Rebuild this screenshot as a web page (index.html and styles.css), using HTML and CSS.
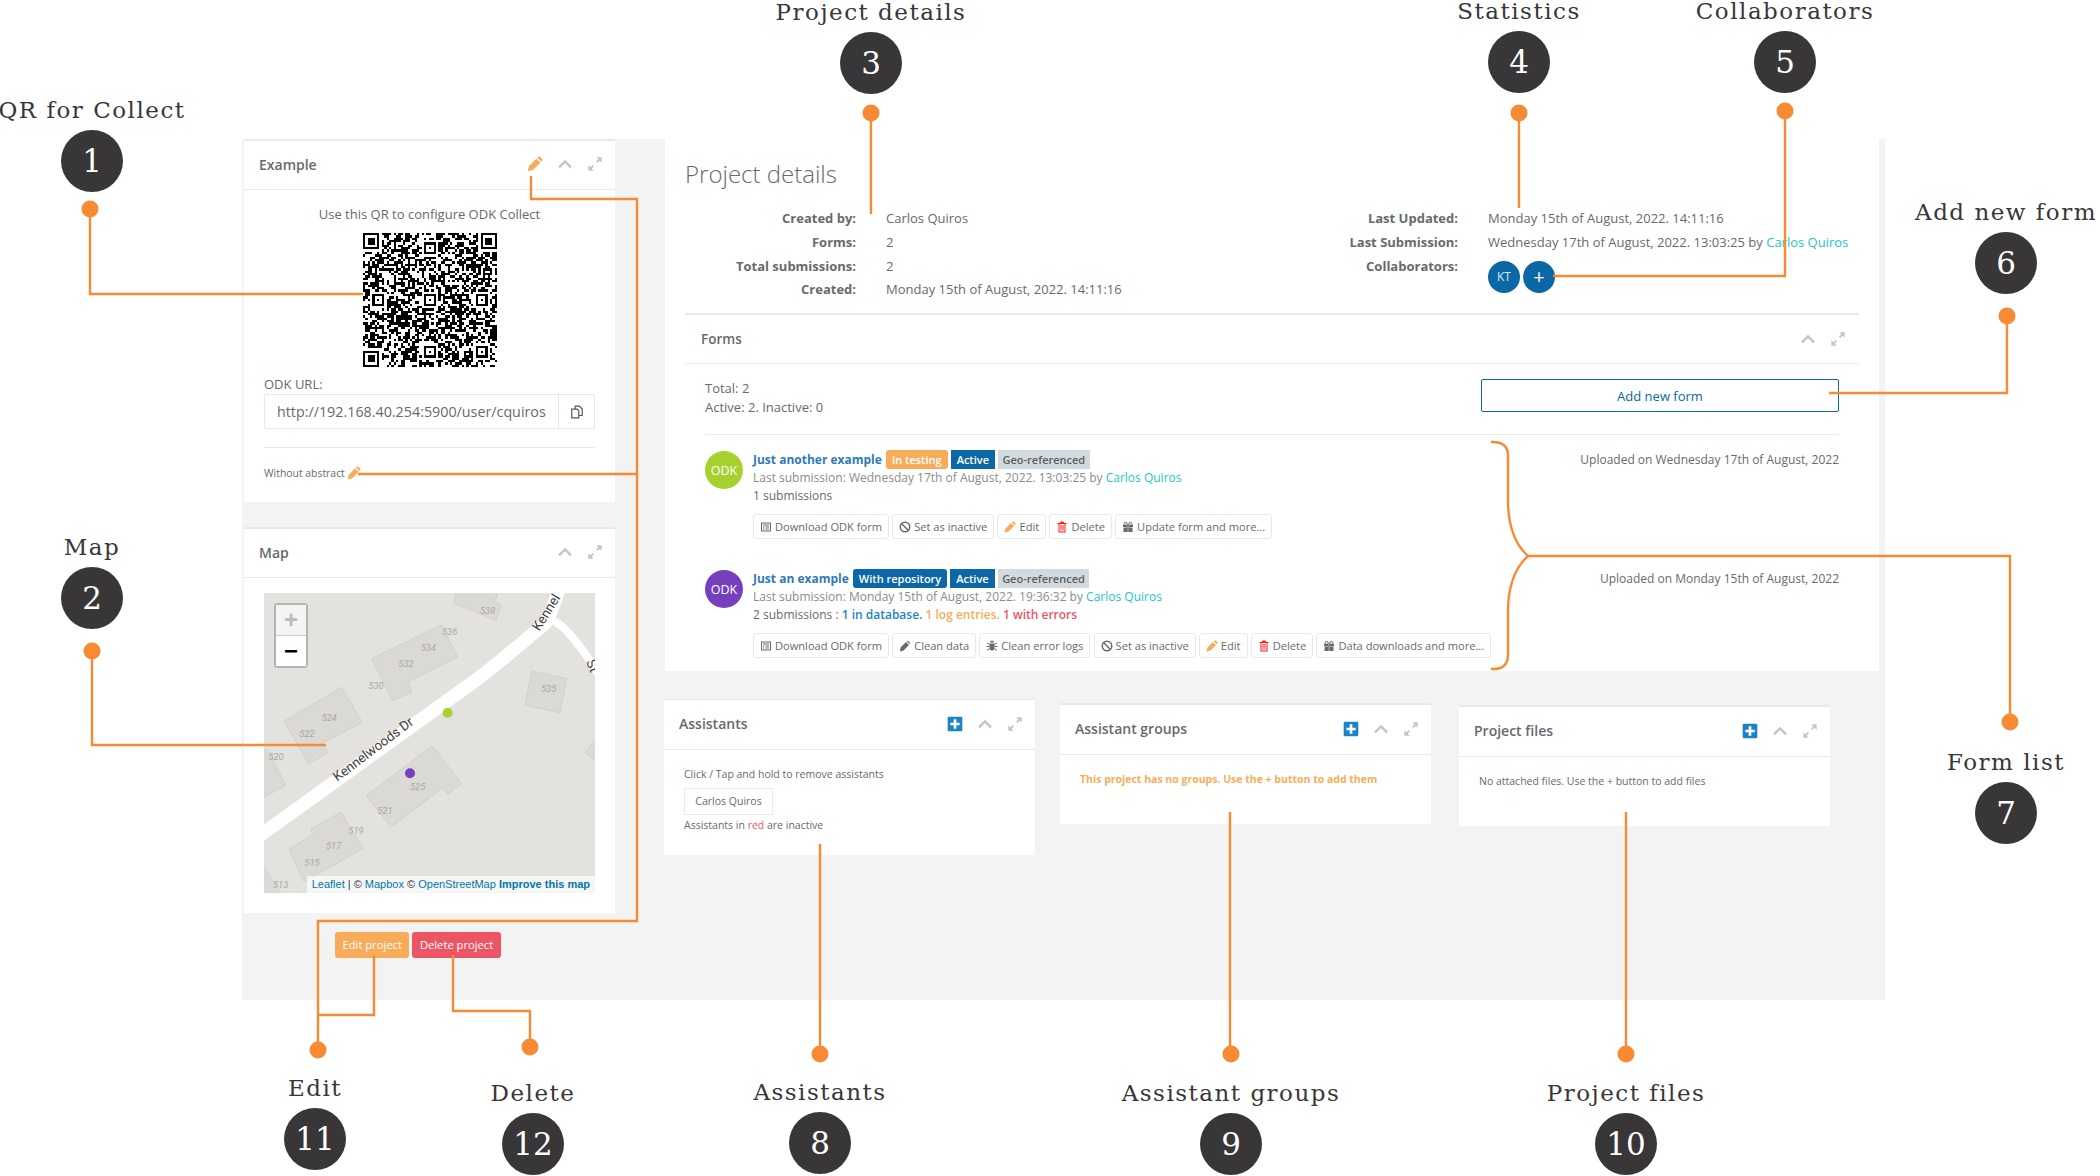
FILE: index.html
```html
<!DOCTYPE html>
<html lang="en">
<head>
<meta charset="UTF-8">
<meta name="viewport" content="width=device-width, initial-scale=1.0">
<title>Project details</title>
<link rel="stylesheet" href="styles.css">
</head>
<body>
<svg class="icon-defs" width="0" height="0">
  <symbol id="i-pencil" viewBox="0 0 24 24"><path d="M1 23l2-8L14 4l6 6L9 21zM15.500 2.500l1.800-1.500q1-.7 2 0l3.700 3.700q.7 1 0 2L21.500 8.500z"/></symbol>
  <symbol id="i-chevron" viewBox="0 0 24 24"><path d="M3 17L12 8l9 9" fill="none" stroke="currentColor" stroke-width="3.600"/></symbol>
  <symbol id="i-expand" viewBox="0 0 24 24"><path d="M14 2h8v8l-3-3-3.500 3.500-2-2L17 5zM10 22H2v-8l3 3 3.500-3.500 2 2L7 19z"/></symbol>
  <symbol id="i-plus-square" viewBox="0 0 24 24"><path fill-rule="evenodd" d="M3 1h18q2 0 2 2v18q0 2-2 2H3q-2 0-2-2V3q0-2 2-2zM10 5v5H5v4h5v5h4v-5h5v-4h-5V5z"/></symbol>
  <symbol id="i-form" viewBox="0 0 24 24"><path fill-rule="evenodd" d="M2 3h20v18H2zM4 5v14h16V5zM6 7h12v2H6zM6 11h3v2H6zM11 11h7v2h-7zM6 15h3v2H6zM11 15h7v2h-7z"/></symbol>
  <symbol id="i-ban" viewBox="0 0 24 24"><circle cx="12" cy="12" r="9.500" fill="none" stroke="currentColor" stroke-width="3"/><path d="M5.500 5.500l13 13" stroke="currentColor" stroke-width="3"/></symbol>
  <symbol id="i-trash" viewBox="0 0 24 24"><path fill-rule="evenodd" d="M9 1h6l1 3h5v2h-2v17H5V6H3V4h5zM7 6v15h10V6zM9 8h2v11H9zM13 8h2v11h-2z"/></symbol>
  <symbol id="i-gift" viewBox="0 0 24 24"><path d="M2 7h8v5H2zM14 7h8v5h-8zM10.500 7h3v15h-3zM3 13h7v9H3zM14 13h7v9h-7z"/><path d="M12 7C9 1 3 2 5 6M12 7c3-6 9-5 7-1" fill="none" stroke="currentColor" stroke-width="2"/></symbol>
  <symbol id="i-bug" viewBox="0 0 24 24"><path d="M8 5a4 4 0 0 1 8 0zM7 7h10v9a5 5 0 0 1-10 0z"/><path d="M7 9L2 6M17 9l5-3M7 13H1M17 13h6M7 17l-5 4M17 17l5 4" stroke="currentColor" stroke-width="2"/></symbol>
  <symbol id="i-copy" viewBox="0 0 24 24"><path d="M9 7V2h7l5 5v11h-6M3 7h9l3 3v12H3z" fill="none" stroke="currentColor" stroke-width="2"/></symbol>
  <symbol id="i-brush" viewBox="0 0 24 24"><path d="M2 23l1-8L14 4l6 6L9 21zM15.500 2.500l2-1.500 5 5-1.500 2z"/></symbol>
</svg>

<div class="app">
  <div class="side">
    <section class="panel panel-example">
      <header class="panel-head">
        <h5>Example</h5>
        <div class="tools">
          <svg class="ico ico-orange"><use href="#i-pencil"/></svg>
          <svg class="ico ico-muted"><use href="#i-chevron"/></svg>
          <svg class="ico ico-muted"><use href="#i-expand"/></svg>
        </div>
      </header>
      <div class="panel-body example-body">
        <p class="qr-title">Use this QR to configure ODK Collect</p>
        <svg class="qr" id="qr" viewBox="0 0 57 57" shape-rendering="crispEdges"><path id="qrPath"/></svg>
        <label class="url-label">ODK URL:</label>
        <div class="url-group">
          <input class="url-input" type="text" value="http://192.168.40.254:5900/user/cquiros">
          <span class="url-copy"><svg class="ico-copy"><use href="#i-copy"/></svg></span>
        </div>
        <hr class="thin">
        <p class="abstract">Without abstract <svg class="ico-small ico-orange"><use href="#i-pencil"/></svg></p>
      </div>
    </section>

    <section class="panel panel-map">
      <header class="panel-head">
        <h5>Map</h5>
        <div class="tools">
          <svg class="ico ico-muted"><use href="#i-chevron"/></svg>
          <svg class="ico ico-muted"><use href="#i-expand"/></svg>
        </div>
      </header>
      <div class="panel-body map-body">
        <div class="map">
          <svg class="map-svg" viewBox="102 219 993 899">
            <g class="houses">
              <polygon points="680,210 673,250 798,300 815,255 795,245 807,210"/>
              <polygon points="426,415 634,314 683,410 533,485 547,515 488,542"/>
              <polygon points="162,603 335,501 397,606 275,670 295,697 236,730"/>
              <polygon points="95,688 112,688 167,795 95,835"/>
              <polygon points="905,453 1010,475 990,578 885,555"/>
              <polygon points="1100,652 1065,697 1100,724"/>
              <polygon points="409,827 606,677 694,790 654,822 638,803 483,921"/>
              <polygon points="177,988 248,943 242,927 333,876 399,985 222,1085"/>
              <polygon points="95,1040 108,1048 155,1125 95,1125"/>
            </g>
            <g class="roads">
              <path class="road" d="M90 946L740 478Q780 450 945 310Q965 280 985 210"/>
              <path class="road road-small" d="M960 298Q1010 310 1105 460"/>
            </g>
            <g class="house-nums">
              <text x="750" y="282">538</text><text x="636" y="346">536</text><text x="572" y="392">534</text>
              <text x="505" y="441">532</text><text x="415" y="507">530</text><text x="933" y="515">535</text>
              <text x="275" y="604">524</text><text x="208" y="650">522</text><text x="115" y="719">520</text>
              <text x="540" y="809">525</text><text x="442" y="881">521</text><text x="355" y="943">519</text>
              <text x="288" y="988">517</text><text x="223" y="1037">515</text><text x="129" y="1103">513</text>
            </g>
            <g class="street-names">
              <text transform="translate(322 785) rotate(-37)">Kennelwoods Dr</text>
              <text transform="translate(928 335) rotate(-58)">Kennel</text>
              <text transform="translate(1068 425) rotate(68)">St</text>
            </g>
            <circle class="pin-green" cx="653" cy="578" r="15"/>
            <circle class="pin-purple" cx="540" cy="759" r="15"/>
          </svg>
          <div class="zoom-ctl">
            <span class="zoom-btn zoom-off">+</span>
            <span class="zoom-btn">&minus;</span>
          </div>
          <div class="attrib"><a>Leaflet</a> | &copy; <a>Mapbox</a> &copy; <a>OpenStreetMap</a> <a class="attrib-strong">Improve this map</a></div>
        </div>
      </div>
    </section>

    <div class="project-actions">
      <button class="btn btn-warning">Edit project</button>
      <button class="btn btn-danger">Delete project</button>
    </div>
  </div>

  <div class="content">
    <section class="main-panel">
      <h2 class="page-title">Project details</h2>
      <div class="details">
        <dl class="facts facts-left">
          <dt>Created by:</dt><dd>Carlos Quiros</dd>
          <dt>Forms:</dt><dd>2</dd>
          <dt>Total submissions:</dt><dd>2</dd>
          <dt>Created:</dt><dd>Monday 15th of August, 2022. 14:11:16</dd>
        </dl>
        <dl class="facts facts-right">
          <dt>Last Updated:</dt><dd>Monday 15th of August, 2022. 14:11:16</dd>
          <dt>Last Submission:</dt><dd>Wednesday 17th of August, 2022. 13:03:25 by <a class="teal">Carlos Quiros</a></dd>
          <dt>Collaborators:</dt>
          <dd class="collabs"><span class="collab">KT</span><span class="collab collab-add">+</span></dd>
        </dl>
      </div>

      <div class="forms">
        <header class="forms-head">
          <h5>Forms</h5>
          <div class="tools">
            <svg class="ico ico-muted"><use href="#i-chevron"/></svg>
            <svg class="ico ico-muted"><use href="#i-expand"/></svg>
          </div>
        </header>
        <div class="forms-body">
          <div class="forms-summary">
            <div class="counts">Total: 2<br>Active: 2. Inactive: 0</div>
            <button class="btn-add">Add new form</button>
          </div>
          <hr class="thin">

          <article class="form-row">
            <span class="avatar avatar-green">ODK</span>
            <div class="form-info">
              <div class="form-title"><a>Just another example</a><span class="tag tag-orange">In testing</span><span class="tag tag-blue">Active</span><span class="tag tag-grey">Geo-referenced</span></div>
              <div class="form-line form-last">Last submission: Wednesday 17th of August, 2022. 13:03:25 by <a class="teal">Carlos Quiros</a></div>
              <div class="form-line">1 submissions</div>
              <div class="form-btns">
                <button class="btn-sm"><svg class="b-ico"><use href="#i-form"/></svg>Download ODK form</button>
                <button class="btn-sm"><svg class="b-ico"><use href="#i-ban"/></svg>Set as inactive</button>
                <button class="btn-sm"><svg class="b-ico ico-orange"><use href="#i-pencil"/></svg>Edit</button>
                <button class="btn-sm"><svg class="b-ico ico-red"><use href="#i-trash"/></svg>Delete</button>
                <button class="btn-sm"><svg class="b-ico"><use href="#i-gift"/></svg>Update form and more...</button>
              </div>
            </div>
            <div class="uploaded">Uploaded on Wednesday 17th of August, 2022</div>
          </article>

          <article class="form-row">
            <span class="avatar avatar-purple">ODK</span>
            <div class="form-info">
              <div class="form-title"><a>Just an example</a><span class="tag tag-blue tag-round">With repository</span><span class="tag tag-blue">Active</span><span class="tag tag-grey">Geo-referenced</span></div>
              <div class="form-line form-last">Last submission: Monday 15th of August, 2022. 19:36:32 by <a class="teal">Carlos Quiros</a></div>
              <div class="form-line">2 submissions : <b class="c-blue">1 in database.</b> <b class="c-orange">1 log entries.</b> <b class="c-red">1 with errors</b></div>
              <div class="form-btns">
                <button class="btn-sm"><svg class="b-ico"><use href="#i-form"/></svg>Download ODK form</button>
                <button class="btn-sm"><svg class="b-ico"><use href="#i-brush"/></svg>Clean data</button>
                <button class="btn-sm"><svg class="b-ico"><use href="#i-bug"/></svg>Clean error logs</button>
                <button class="btn-sm"><svg class="b-ico"><use href="#i-ban"/></svg>Set as inactive</button>
                <button class="btn-sm"><svg class="b-ico ico-orange"><use href="#i-pencil"/></svg>Edit</button>
                <button class="btn-sm"><svg class="b-ico ico-red"><use href="#i-trash"/></svg>Delete</button>
                <button class="btn-sm"><svg class="b-ico"><use href="#i-gift"/></svg>Data downloads and more...</button>
              </div>
            </div>
            <div class="uploaded">Uploaded on Monday 15th of August, 2022</div>
          </article>
        </div>
      </div>
    </section>

    <div class="lower">
      <section class="panel panel-assist">
        <header class="panel-head panel-head-low">
          <h5>Assistants</h5>
          <div class="tools">
            <svg class="ico ico-blue"><use href="#i-plus-square"/></svg>
            <svg class="ico ico-muted"><use href="#i-chevron"/></svg>
            <svg class="ico ico-muted"><use href="#i-expand"/></svg>
          </div>
        </header>
        <div class="panel-body assist-body">
          <p>Click / Tap and hold to remove assistants</p>
          <span class="chip">Carlos Quiros</span>
          <p>Assistants in <span class="c-red">red</span> are inactive</p>
        </div>
      </section>

      <section class="panel panel-groups">
        <header class="panel-head panel-head-low">
          <h5>Assistant groups</h5>
          <div class="tools">
            <svg class="ico ico-blue"><use href="#i-plus-square"/></svg>
            <svg class="ico ico-muted"><use href="#i-chevron"/></svg>
            <svg class="ico ico-muted"><use href="#i-expand"/></svg>
          </div>
        </header>
        <div class="panel-body note-body"><p class="note-warn">This project has no groups. Use the + button to add them</p></div>
      </section>

      <section class="panel panel-files">
        <header class="panel-head panel-head-low">
          <h5>Project files</h5>
          <div class="tools">
            <svg class="ico ico-blue"><use href="#i-plus-square"/></svg>
            <svg class="ico ico-muted"><use href="#i-chevron"/></svg>
            <svg class="ico ico-muted"><use href="#i-expand"/></svg>
          </div>
        </header>
        <div class="panel-body note-body"><p class="note-plain">No attached files. Use the + button to add files</p></div>
      </section>
    </div>
  </div>
</div>

<!-- annotation layer: leader lines, dots and numbered callouts -->
<svg class="leaders" viewBox="0 0 2100 1176">
  <g class="lines">
    <path d="M90 209V294H363"/>
    <path d="M92 651V745H326"/>
    <path d="M871 113V214"/>
    <path d="M1519 113V208"/>
    <path d="M1785 111V276H1553"/>
    <path d="M2007 316V393H1829"/>
    <path d="M2010 722V556H1528"/>
    <path d="M1491 442Q1508 441 1508 456V500Q1508 538 1528 556Q1508 574 1508 612V655Q1508 670 1491 669"/>
    <path d="M820 1054V844"/>
    <path d="M1230 1054V812"/>
    <path d="M1626 1054V812"/>
    <path d="M531 176V199H637V921H318V1050"/>
    <path d="M358 474H637"/>
    <path d="M374 955V1015H318"/>
    <path d="M530 1047V1011H453V955"/>
  </g>
  <g class="dots">
    <circle cx="90" cy="209" r="8.500"/><circle cx="92" cy="651" r="8.500"/>
    <circle cx="871" cy="113" r="8.500"/><circle cx="1519" cy="113" r="8.500"/>
    <circle cx="1785" cy="111" r="8.500"/><circle cx="2007" cy="316" r="8.500"/>
    <circle cx="2010" cy="722" r="8.500"/><circle cx="820" cy="1054" r="8.500"/>
    <circle cx="1231" cy="1054" r="8.500"/><circle cx="1626" cy="1054" r="8.500"/>
    <circle cx="318" cy="1050" r="8.500"/><circle cx="530" cy="1047" r="8.500"/>
  </g>
</svg>
<div class="callout c1"><span class="callout-label">QR for Collect</span><span class="badge">1</span></div>
<div class="callout c2"><span class="callout-label">Map</span><span class="badge">2</span></div>
<div class="callout c3"><span class="callout-label">Project details</span><span class="badge">3</span></div>
<div class="callout c4"><span class="callout-label">Statistics</span><span class="badge">4</span></div>
<div class="callout c5"><span class="callout-label">Collaborators</span><span class="badge">5</span></div>
<div class="callout c6"><span class="callout-label">Add new form</span><span class="badge">6</span></div>
<div class="callout c7"><span class="callout-label">Form list</span><span class="badge">7</span></div>
<div class="callout c8"><span class="callout-label">Assistants</span><span class="badge">8</span></div>
<div class="callout c9"><span class="callout-label">Assistant groups</span><span class="badge">9</span></div>
<div class="callout c10"><span class="callout-label">Project files</span><span class="badge">10</span></div>
<div class="callout c11"><span class="callout-label">Edit</span><span class="badge">11</span></div>
<div class="callout c12"><span class="callout-label">Delete</span><span class="badge">12</span></div>

<script>
// draws a QR-looking block: finder and alignment squares plus noise
document.addEventListener("DOMContentLoaded", function() {
  const size = 57;
  const grid = [];
  let seed = 20220815;

  function rand() {
    seed = (seed * 1103515245 + 12345) % 2147483648;
    return (seed >> 8) % 100;
  }

  for (let y = 0; y < size; y++) {
    grid[y] = [];
    for (let x = 0; x < size; x++) {
      grid[y][x] = rand() < 55;
    }
  }

  function square(cx, cy, outer) {
    for (let y = -outer - 1; y <= outer + 1; y++) {
      for (let x = -outer - 1; x <= outer + 1; x++) {
        const row = grid[cy + y];
        if (!row || row[cx + x] === undefined) continue;
        const d = Math.max(Math.abs(x), Math.abs(y));
        row[cx + x] = d === outer || d < outer - 1;
      }
    }
  }

  square(3, 3, 3);
  square(size - 4, 3, 3);
  square(3, size - 4, 3);
  [[28, 6], [6, 28], [28, 28], [50, 28], [28, 50], [50, 50]].forEach(function(p) {
    square(p[0], p[1], 2);
  });

  let d = '';
  for (let y = 0; y < size; y++) {
    for (let x = 0; x < size; x++) {
      if (grid[y][x]) d += 'M' + x + ' ' + y + 'h1v1h-1z';
    }
  }
  document.getElementById('qrPath').setAttribute('d', d);
});
</script>
</body>
</html>
```

FILE: styles.css
```css
html, body {
  margin: 0;
  padding: 0;
  background-color: white;
}

body {
  position: relative;
  width: 2100px;
  height: 1176px;
  overflow: hidden;
  font-family: 'Open Sans', sans-serif;
  font-size: 13px;
  color: #676a6c;
}

h2, h5, p, dl, dd {
  margin: 0;
}

a {
  color: inherit;
}

button {
  font-family: inherit;
  cursor: pointer;
}

.icon-defs {
  position: absolute;
}

.app {
  display: flex;
  gap: 49px;
  box-sizing: border-box;
  width: 1643px;
  height: 861px;
  margin: 139px 0 0 242px;
  background-color: #f3f3f3;
}

.side {
  flex: 0 0 371px;
  margin-left: 2px;
}

.content {
  flex: 1;
}

/* Panels */
.panel {
  box-sizing: border-box;
  width: 371px;
  background-color: white;
  border-top: 2px solid #e7eaec;
}

.panel-head {
  display: flex;
  align-items: center;
  justify-content: space-between;
  box-sizing: border-box;
  height: 49px;
  padding: 0 12px 2px 15px;
  border-bottom: 1px solid #e7eaec;
}

.panel-head h5, .forms-head h5 {
  font-size: 14px;
  font-weight: 600;
}

.panel-head-low {
  height: 50px;
}

.tools {
  display: flex;
  gap: 14px;
  align-items: center;
}

.ico {
  width: 16px;
  height: 16px;
  fill: currentColor;
}

.ico-muted {
  color: #c4c4c4;
}

.ico-orange {
  color: #f8ac59;
  fill: #f8ac59;
}

.ico-blue {
  color: #1c84c6;
}

.ico-red {
  color: #ff1a1a;
  fill: #ff1a1a;
}

.panel-example {
  height: 363px;
}

.example-body {
  padding: 14px 20px 0;
}

.qr-title {
  line-height: 20px;
  text-align: center;
}

.qr {
  display: block;
  width: 134px;
  height: 134px;
  margin: 9px auto 7px;
}

.url-label {
  display: block;
  line-height: 20px;
}

.url-group {
  display: flex;
  box-sizing: border-box;
  height: 35px;
  border: 1px solid #e5e6e7;
  border-radius: 2px;
}

.url-input {
  box-sizing: border-box;
  width: 293px;
  padding: 0 12px;
  border: none;
  outline: none;
  font-family: inherit;
  font-size: 14.300px;
  color: #676a6c;
  background: transparent;
}

.url-copy {
  display: flex;
  flex: 1;
  align-items: center;
  justify-content: center;
  border-left: 1px solid #e5e6e7;
}

.ico-copy {
  width: 14px;
  height: 14px;
  color: #555;
}

.thin {
  height: 1px;
  margin: 0;
  border: none;
  background-color: #e7eaec;
}

.example-body .thin {
  margin-top: 18px;
}

.abstract {
  display: flex;
  align-items: center;
  gap: 2px;
  margin-top: 15px;
  line-height: 20px;
  font-size: 10.400px;
}

.ico-small {
  width: 14px;
  height: 14px;
}

/* Map */
.panel-map {
  height: 386px;
  margin-top: 25px;
}

.map-body {
  padding: 15px 20px 0;
}

.map {
  position: relative;
  width: 331px;
  height: 300px;
  overflow: hidden;
  background-color: #e3e2df;
}

.map-svg {
  display: block;
  width: 331px;
  height: 300px;
}

.houses polygon {
  fill: #dbd9d5;
  stroke: #cfcdc9;
  stroke-width: 2.500;
}

.road {
  fill: none;
  stroke: white;
  stroke-width: 40;
}

.road-small {
  stroke-width: 24;
}

.house-nums text {
  font-family: 'Roboto', sans-serif;
  font-size: 28px;
  font-style: italic;
  fill: #aaa8a4;
}

.street-names text {
  font-family: 'Roboto', sans-serif;
  font-size: 40px;
  fill: #3d3d3d;
}

.pin-green {
  fill: #a6d12e;
}

.pin-purple {
  fill: #7540bd;
}

.zoom-ctl {
  position: absolute;
  top: 10px;
  left: 10px;
  display: flex;
  flex-direction: column;
  width: 30px;
  border: 2px solid #b3b3b3;
  border-radius: 4px;
}

.zoom-btn {
  height: 30px;
  font-family: 'Liberation Sans', sans-serif;
  font-size: 24px;
  font-weight: bold;
  line-height: 29px;
  text-align: center;
  color: black;
  background-color: white;
}

.zoom-off {
  color: #bbb;
  background-color: #f4f4f4;
  border-bottom: 1px solid #ccc;
}

.attrib {
  position: absolute;
  right: 0;
  bottom: 0;
  padding: 0 5px;
  font-family: 'Liberation Sans', sans-serif;
  font-size: 11px;
  line-height: 17px;
  white-space: nowrap;
  color: #333;
  background-color: rgba(255, 255, 255, 0.7);
}

.attrib a {
  color: #0078a8;
}

.attrib-strong {
  font-weight: bold;
}

.project-actions {
  display: flex;
  gap: 3px;
  margin: 19px 0 0 91px;
}

.btn {
  height: 26px;
  padding: 0 7.500px 1px;
  border: none;
  border-radius: 3px;
  font-size: 11.200px;
  color: white;
}

.btn-warning {
  background-color: #f8ac59;
}

.btn-danger {
  background-color: #ed5565;
}

/* Project details */
.main-panel {
  box-sizing: border-box;
  height: 532px;
  margin: 0 6px 0 1px;
  padding: 0 20px;
  background-color: white;
}

.page-title {
  padding: 20px 0 17px;
  font-size: 24px;
  font-weight: 300;
  line-height: 30px;
}

.details {
  display: flex;
  height: 107px;
}

.facts {
  display: grid;
  grid-template-rows: 24px 24px 23px 24px;
  column-gap: 30px;
  align-items: center;
  align-content: start;
  line-height: 24px;
}

.facts dt {
  font-weight: 700;
  text-align: right;
  white-space: nowrap;
}

.facts-left {
  flex: 0 0 615px;
  grid-template-columns: 171px 1fr;
}

.facts-right {
  flex: 1;
  grid-template-columns: 158px 1fr;
}

.teal {
  color: #23c6c8;
}

.collabs {
  display: flex;
  gap: 3px;
  align-self: start;
  padding-top: 7px;
}

.collab {
  display: inline-flex;
  flex: 0 0 32px;
  align-items: center;
  justify-content: center;
  height: 32px;
  border-radius: 50%;
  font-size: 12px;
  line-height: 1;
  color: #dbe9f3;
  background-color: #0b67a5;
}

.collab-add {
  font-size: 20px;
  color: white;
}

.forms {
  border-top: 2px solid #e7eaec;
}

.forms-head {
  display: flex;
  align-items: center;
  justify-content: space-between;
  box-sizing: border-box;
  height: 49px;
  padding: 0 13px 0 16px;
  border-bottom: 1px solid #e7eaec;
}

.forms-head h5 {
  font-size: 13.500px;
}

.forms-body {
  padding: 0 20px;
}

.forms-summary {
  display: flex;
  justify-content: space-between;
  padding-top: 15px;
  margin-bottom: 17px;
}

.counts {
  line-height: 19px;
  font-size: 13px;
}

.btn-add {
  box-sizing: border-box;
  width: 358px;
  height: 33px;
  border: 1px solid #0b67a5;
  border-radius: 2px;
  font-size: 13px;
  color: #0b67a5;
  background-color: white;
}

.form-row {
  display: flex;
  position: relative;
  padding: 16px 0 15px;
}

.form-row:last-child {
  padding-bottom: 12px;
}

.avatar {
  display: flex;
  flex: 0 0 38px;
  align-items: center;
  justify-content: center;
  height: 38px;
  border-radius: 50%;
  font-size: 12.500px;
  color: white;
}

.avatar-green {
  background-color: #a6d12e;
}

.avatar-purple {
  background-color: #7540bd;
}

.form-info {
  flex: 1;
  margin: -1px 0 0 10px;
  font-size: 12px;
}

.form-title {
  display: flex;
  align-items: center;
  gap: 3px;
  height: 19px;
  font-weight: 700;
  font-size: 12px;
  color: #2f7ab8;
}

.tag {
  height: 19px;
  padding: 0 6px;
  font-size: 11px;
  font-weight: 600;
  line-height: 19px;
  white-space: nowrap;
}

.tag-orange {
  margin-left: 1px;
  border-radius: 3px;
  color: white;
  background-color: #f8ac59;
}

.tag-blue {
  color: white;
  background-color: #0b67a5;
}

.tag-round {
  margin-left: 1px;
  border-radius: 3px;
}

.tag-grey {
  padding: 0 4.500px;
  color: #5e5e5e;
  background-color: #d1dade;
}

.form-line {
  line-height: 18px;
}

.form-last {
  color: #8a8c8e;
}

.c-blue {
  font-weight: 600;
  color: #1c84c6;
}

.c-orange {
  font-weight: 600;
  color: #f8ac59;
}

.c-red {
  color: #ed5565;
}

b.c-red {
  font-weight: 600;
}

.form-btns {
  display: flex;
  gap: 3.200px;
  margin-top: 9px;
}

.btn-sm {
  display: inline-flex;
  align-items: center;
  gap: 3px;
  box-sizing: border-box;
  height: 25px;
  padding: 0 6px;
  border: 1px solid #e7eaec;
  border-radius: 3px;
  font-size: 11.100px;
  white-space: nowrap;
  color: #676a6c;
  background-color: white;
}

.b-ico {
  width: 12px;
  height: 12px;
  fill: currentColor;
}

.uploaded {
  position: absolute;
  top: 16px;
  right: 0;
  line-height: 18px;
  font-size: 12px;
}

/* Lower panels */
.lower {
  display: flex;
  align-items: flex-start;
}

.panel-assist {
  height: 156px;
  margin-top: 28px;
  border-top-width: 1px;
}

.panel-groups {
  height: 121px;
  margin: 32px 0 0 25px;
}

.panel-files {
  height: 121px;
  margin: 34px 0 0 28px;
}

.assist-body {
  padding: 16px 20px 0;
  font-size: 10.500px;
}

.assist-body p {
  line-height: 16px;
}

.chip {
  display: inline-block;
  box-sizing: border-box;
  width: 89px;
  height: 27px;
  margin: 6px 0 2px;
  border: 1px solid #e7eaec;
  line-height: 25px;
  text-align: center;
}

.note-body {
  padding: 15px 20px 0;
  font-size: 10.500px;
  line-height: 18px;
}

.note-warn {
  font-weight: 700;
  color: #f8ac59;
}

/* Annotation layer */
.leaders {
  position: absolute;
  top: 0;
  left: 0;
  width: 2100px;
  height: 1176px;
  pointer-events: none;
}

.lines path {
  fill: none;
  stroke: #f78a33;
  stroke-width: 2.400;
}

.dots circle {
  fill: #f78a33;
}

.callout {
  position: absolute;
  display: flex;
  flex-direction: column;
  align-items: center;
  gap: 6px;
  width: 0;
}

.callout-label {
  height: 28px;
  font-family: 'DejaVu Serif', serif;
  font-size: 23px;
  line-height: 28px;
  letter-spacing: 1.500px;
  white-space: nowrap;
  color: #383637;
}

.badge {
  display: flex;
  flex: 0 0 62px;
  align-items: center;
  justify-content: center;
  width: 62px;
  border-radius: 50%;
  font-family: 'DejaVu Serif', serif;
  font-size: 31px;
  color: white;
  background-color: #383637;
}

.c1 { left: 92px; top: 96px; }
.c2 { left: 92px; top: 533px; }
.c3 { left: 871px; top: -2px; }
.c4 { left: 1519px; top: -3px; }
.c5 { left: 1785px; top: -3px; }
.c6 { left: 2006px; top: 198px; }
.c7 { left: 2006px; top: 748px; }
.c8 { left: 820px; top: 1078px; }
.c9 { left: 1231px; top: 1079px; }
.c10 { left: 1626px; top: 1079px; }
.c11 { left: 315px; top: 1074px; }
.c12 { left: 533px; top: 1079px; }
```
